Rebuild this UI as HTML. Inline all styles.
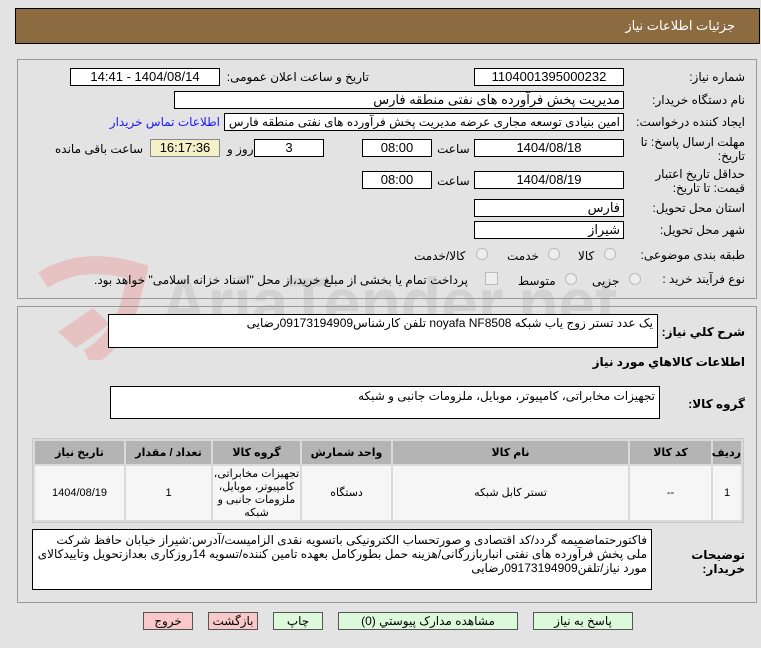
<!DOCTYPE html>
<html><head><meta charset="utf-8"><style>
body{margin:0;width:761px;height:648px;background:#e3e3e3;font-family:"Liberation Sans","DejaVu Sans",sans-serif;font-size:12px;color:#000;position:relative;overflow:hidden;direction:rtl}
.a{position:absolute;white-space:nowrap}
.in{position:absolute;background:#fff;border:1px solid #000;box-sizing:border-box;text-align:center;font-size:13px;line-height:16px;overflow:hidden;white-space:nowrap}
.l{position:absolute;white-space:nowrap;font-size:12px}
.ta{position:absolute;background:#fff;border:1px solid #000;box-sizing:border-box;padding:2px 4px;font-size:12px;line-height:14px;text-align:right;overflow:hidden}
.rad{position:absolute;width:10px;height:10px;border:1px solid #bbb;border-radius:50%;background:#eee}
.btn{position:absolute;border:1px solid #555;box-sizing:border-box;text-align:center;font-size:12px;line-height:16px;top:612px;height:18px}
table{position:absolute;left:32px;top:438px;width:712px;table-layout:fixed;border-collapse:separate;border-spacing:2px;background:#dadada;border:1px solid #c8c8c8}
th{background:#b4b4b4;height:23px;font-size:11px;padding:0}
td{background:#f6f6f6;text-align:center;font-size:11px;height:54px;line-height:13px;padding:0;overflow:hidden}
td div{height:54px;overflow:hidden;display:flex;align-items:center;justify-content:center}
</style></head><body>
<div class="a" style="left:15px;top:8px;width:745px;height:36px;background:#8c6b40;border:1px solid #000;box-sizing:border-box"></div>
<div class="a" style="right:26px;top:18px;color:#fff;font-size:13px">جزئیات اطلاعات نیاز</div>
<svg class="a" style="left:18px;top:250px" width="130" height="110" viewBox="0 0 130 110"><path d="M25 30 Q65 5 120 22 L110 60 Q95 95 70 108" fill="none" stroke="#e6c2c2" stroke-width="18"/><path d="M40 82 L75 58 L92 74 L58 98Z" fill="#e6c2c2"/></svg>
<div class="a" style="left:160px;top:268px;font-size:66px;font-weight:bold;color:#d2d2d2;direction:ltr;line-height:70px;transform:scaleY(1.1)">AriaTender.net</div>
<div class="a" style="left:17px;top:59px;width:740px;height:240px;border:1px solid #999;box-sizing:border-box"></div>
<div class="a" style="left:17px;top:306px;width:740px;height:297px;border:1px solid #999;box-sizing:border-box"></div>

<div class="l" style="right:16px;top:70px">شماره نیاز:</div>
<div class="in" style="left:474px;top:68px;width:150px;height:18px">1104001395000232</div>
<div class="l" style="right:392px;top:70px">تاریخ و ساعت اعلان عمومی:</div>
<div class="in" style="left:70px;top:68px;width:150px;height:18px">1404/08/14 - 14:41</div>
<div class="l" style="right:16px;top:93px">نام دستگاه خریدار:</div>
<div class="in" style="left:174px;top:91px;width:450px;height:18px;text-align:right;padding-right:3px">مدیریت پخش فرآورده های نفتی منطقه فارس</div>
<div class="l" style="right:16px;top:115px">ایجاد کننده درخواست:</div>
<div class="in" style="left:224px;top:113px;width:400px;height:18px;text-align:right;padding-right:3px;font-size:12px">امین بنیادی توسعه مجاری عرضه مدیریت پخش فرآورده های نفتی منطقه فارس</div>
<div class="l" style="right:541px;top:115px;color:#1a1aff">اطلاعات تماس خریدار</div>
<div class="l" style="right:16px;top:135px;line-height:14px;text-align:right">مهلت ارسال پاسخ: تا<br>تاریخ:</div>
<div class="in" style="left:474px;top:139px;width:150px;height:18px">1404/08/18</div>
<div class="l" style="left:437px;top:142px">ساعت</div>
<div class="in" style="left:362px;top:139px;width:70px;height:18px">08:00</div>
<div class="in" style="left:254px;top:139px;width:70px;height:18px">3</div>
<div class="l" style="left:227px;top:142px">روز و</div>
<div class="in" style="left:150px;top:139px;width:70px;height:18px;background:#f4f0c8;border-color:#888">16:17:36</div>
<div class="l" style="left:55px;top:142px">ساعت باقی مانده</div>
<div class="l" style="right:16px;top:167px;line-height:14px;text-align:right">حداقل تاریخ اعتبار<br>قیمت: تا تاریخ:</div>
<div class="in" style="left:474px;top:171px;width:150px;height:18px">1404/08/19</div>
<div class="l" style="left:437px;top:174px">ساعت</div>
<div class="in" style="left:362px;top:171px;width:70px;height:18px">08:00</div>
<div class="l" style="right:16px;top:201px">استان محل تحویل:</div>
<div class="in" style="left:474px;top:199px;width:150px;height:18px;text-align:right;padding-right:3px">فارس</div>
<div class="l" style="right:16px;top:223px">شهر محل تحویل:</div>
<div class="in" style="left:474px;top:221px;width:150px;height:18px;text-align:right;padding-right:3px">شیراز</div>
<div class="l" style="right:16px;top:248px">طبقه بندی موضوعی:</div>
<div class="rad" style="left:604px;top:248px"></div><div class="l" style="left:578px;top:249px">کالا</div>
<div class="rad" style="left:548px;top:248px"></div><div class="l" style="left:507px;top:249px">خدمت</div>
<div class="rad" style="left:476px;top:248px"></div><div class="l" style="left:414px;top:249px">کالا/خدمت</div>
<div class="l" style="right:16px;top:272px">نوع فرآیند خرید :</div>
<div class="rad" style="left:629px;top:273px"></div><div class="l" style="left:592px;top:274px">جزیی</div>
<div class="rad" style="left:565px;top:273px"></div><div class="l" style="left:518px;top:274px">متوسط</div>
<div class="a" style="left:485px;top:272px;width:11px;height:11px;border:1px solid #bbb;background:#eee"></div>
<div class="l" style="left:94px;top:273px">پرداخت تمام یا بخشی از مبلغ خرید،از محل "اسناد خزانه اسلامی" خواهد بود.</div>

<div class="l" style="right:16px;top:325px;font-weight:bold">شرح کلي نیاز:</div>
<div class="ta" style="left:108px;top:314px;width:550px;height:34px;padding-top:1px">یک عدد تستر زوج یاب شبکه noyafa NF8508 تلفن کارشناس09173194909رضایی</div>
<div class="l" style="right:16px;top:355px;font-weight:bold">اطلاعات کالاهاي مورد نیاز</div>
<div class="l" style="right:16px;top:397px;font-weight:bold">گروه کالا:</div>
<div class="ta" style="left:110px;top:386px;width:550px;height:33px">تجهیزات مخابراتی، کامپیوتر، موبایل، ملزومات جانبی و شبکه</div>

<table>
<colgroup><col style="width:28px"><col style="width:81px"><col style="width:235px"><col style="width:89px"><col style="width:87px"><col style="width:85px"><col></colgroup>
<tr><th>ردیف</th><th>کد کالا</th><th>نام کالا</th><th>واحد شمارش</th><th>گروه کالا</th><th>تعداد / مقدار</th><th>تاریخ نیاز</th></tr>
<tr><td><div>1</div></td><td><div>--</div></td><td><div>تستر کابل شبکه</div></td><td><div>دستگاه</div></td><td><div style="align-items:flex-start;padding-top:2px;box-sizing:border-box">تجهیزات مخابراتی، کامپیوتر، موبایل، ملزومات جانبی و شبکه</div></td><td><div>1</div></td><td><div>1404/08/19</div></td></tr>
</table>

<div class="l" style="right:16px;top:548px;font-weight:bold;line-height:14px">توضیحات<br>خریدار:</div>
<div class="ta" style="left:32px;top:529px;width:620px;height:61px;white-space:normal;padding-top:3px">فاکتورحتماضمیمه گردد/کد اقتصادی و صورتحساب الکترونیکی باتسویه نقدی الزامیست/آدرس:شیراز خیابان حافظ شرکت ملی پخش فرآورده های نفتی انباربازرگانی/هزینه حمل بطورکامل بعهده تامین کننده/تسویه 14روزکاری بعدازتحویل وتاییدکالای مورد نیاز/تلفن09173194909رضایی</div>

<div class="btn" style="left:143px;width:50px;background:#f9c9c9">خروج</div>
<div class="btn" style="left:208px;width:50px;background:#f9c9c9">بازگشت</div>
<div class="btn" style="left:273px;width:50px;background:#dcf9dc">چاپ</div>
<div class="btn" style="left:338px;width:180px;background:#dcf9dc">مشاهده مدارک پیوستي (0)</div>
<div class="btn" style="left:533px;width:100px;background:#dcf9dc">پاسخ به نیاز</div>
</body></html>
